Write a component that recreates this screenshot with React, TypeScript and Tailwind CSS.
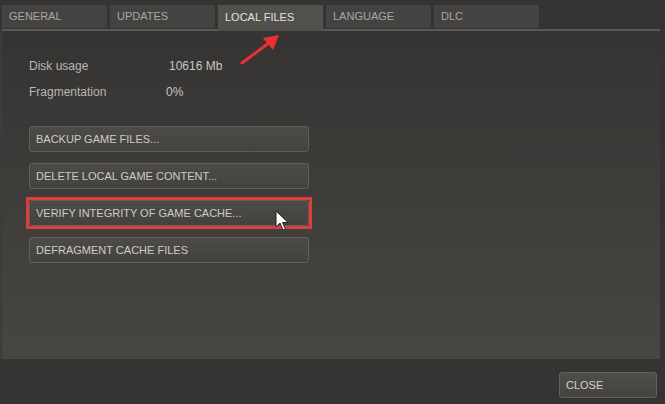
import React from 'react';

const tabs = ['GENERAL', 'UPDATES', 'LOCAL FILES', 'LANGUAGE', 'DLC'];

const ActionButton: React.FC<{ label: string; highlighted?: boolean }> = ({ label, highlighted }) => (
  <div className={highlighted ? 'border-[3px] border-[#e03c3c] w-[286px] -mx-[3px]' : 'w-[280px]'}>
    <div className="h-[26px] w-[280px] rounded-[3px] border border-[#615f5c] bg-gradient-to-b from-[#4d4b48] to-[#44423f] flex items-center px-[6px] text-[11px] text-[#cdcbc8]">
      {label}
    </div>
  </div>
);

export default function App() {
  return (
    <div
      className="relative w-[665px] h-[404px] bg-[#363432] overflow-hidden"
      style={{ fontFamily: '"Liberation Sans", Arial, sans-serif' }}
    >
      {/* tab strip */}
      <div className="flex gap-[3px] pl-[2px] pt-[5px] h-[29px]">
        {tabs.map((t) => {
          const active = t === 'LOCAL FILES';
          return (
            <div
              key={t}
              className={
                active
                  ? 'w-[105px] h-[26px] bg-[#51504d] text-[#e4e2df] text-[11px] pl-[7px] pt-[4px]'
                  : 'w-[105px] h-[23px] bg-[#454341] text-[#a9a7a4] text-[11px] pl-[7px] pt-[3px]'
              }
            >
              {t}
            </div>
          );
        })}
      </div>
      <div className="h-[2px] w-[658px] ml-[2px] bg-[#5a5855]" />

      {/* content panel */}
      <div className="w-[660px] h-[328px] bg-gradient-to-b from-[#363432] to-[#484643] border-l-2 border-[#3e3c3a] pl-[27px] pt-[26px]">
        <div className="grid grid-cols-[140px_1fr] gap-y-[8px] text-[12px] text-[#b9b7b4]">
          <div>Disk usage</div>
          <div className="text-[#c9c7c4]">10616 Mb</div>
          <div>Fragmentation</div>
          <div className="-ml-[3px] text-[#c9c7c4]">0%</div>
        </div>
        <div className="mt-[25px] flex flex-col gap-[11px]">
          <ActionButton label="BACKUP GAME FILES..." />
          <ActionButton label="DELETE LOCAL GAME CONTENT..." />
          <div className="-my-[3px]">
            <ActionButton label="VERIFY INTEGRITY OF GAME CACHE..." highlighted />
          </div>
          <ActionButton label="DEFRAGMENT CACHE FILES" />
        </div>
      </div>

      {/* footer */}
      <div className="flex justify-end pr-[8px] pt-[13px]">
        <div className="w-[98px] h-[26px] rounded-[3px] border border-[#63615e] bg-gradient-to-b from-[#4f4d4a] to-[#454340] flex items-center px-[6px] text-[11px] text-[#d4d2cf]">
          CLOSE
        </div>
      </div>

      {/* red annotation arrow */}
      <svg className="absolute left-[236px] top-[30px]" width="50" height="38" viewBox="0 0 50 38">
        <path d="M6 33 L34 12" stroke="#ec3030" strokeWidth="3" strokeLinecap="round" />
        <path d="M43 5 L27 8 L37 20 Z" fill="#ec3030" />
      </svg>

      {/* mouse cursor */}
      <svg className="absolute left-[275px] top-[210px]" width="16" height="22" viewBox="0 0 16 22">
        <path d="M1 1 L1 17 L5 13 L8 20 L10.5 19 L7.5 12.5 L13 12.5 Z" fill="#ffffff" stroke="#222" strokeWidth="1" strokeLinejoin="round" />
      </svg>
    </div>
  );
}
